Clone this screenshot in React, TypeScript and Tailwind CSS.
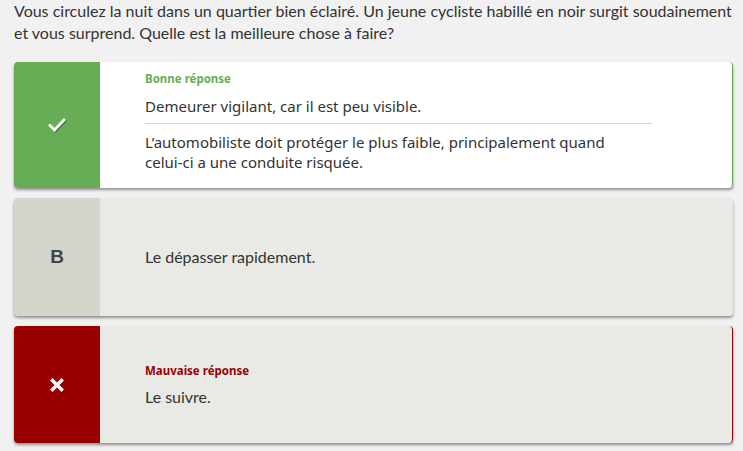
import React from "react";

const CheckIcon = () => (
  <svg width="18" height="16" viewBox="0 0 18 16" className="drop-shadow-[1px_1px_0_rgba(0,0,0,0.35)]">
    <path d="M2 8.5 L6.5 13 L16 3" fill="none" stroke="#ffffff" strokeWidth="2.8" strokeLinecap="square" />
  </svg>
);

const CrossIcon = () => (
  <svg width="14" height="14" viewBox="0 0 14 14">
    <path d="M2.5 2.5 L11.5 11.5 M11.5 2.5 L2.5 11.5" fill="none" stroke="#ffffff" strokeWidth="3.4" strokeLinecap="square" />
  </svg>
);

export default function App() {
  return (
    <div className="min-h-[451px] w-[743px] bg-[#f1f1f1] pl-[14px] pr-[10px] font-['Lato',sans-serif] text-[#333333]">
      <p className="text-[16px] leading-[22px]">
        Vous circulez la nuit dans un quartier bien éclairé. Un jeune cycliste habillé en noir surgit soudainement
        et vous surprend. Quelle est la meilleure chose à faire?
      </p>

      <div className="mt-[18px] flex flex-col gap-[10px]">
        {/* bonne réponse */}
        <div className="flex h-[126px] overflow-hidden rounded-[4px] border-r border-[#66ad55] bg-white shadow-[0_2px_3px_rgba(0,0,0,0.4)]">
          <div className="flex w-[86px] shrink-0 items-center justify-center bg-[#66ad55]">
            <CheckIcon />
          </div>
          <div className="flex flex-col pl-[45px] pt-[9px] font-['Noto_Sans',sans-serif]">
            <span className="text-[11.5px] font-bold leading-[16px] text-[#66ad55]">Bonne réponse</span>
            <span className="mt-[9px] text-[15px] leading-[20px] text-[#333333]">
              Demeurer vigilant, car il est peu visible.
            </span>
            <div className="mt-[7px] h-px w-[507px] bg-[#d6d6cc]" />
            <p className="mt-[8px] w-[490px] text-[15px] leading-[20px] text-[#333333]">
              L’automobiliste doit protéger le plus faible, principalement quand celui-ci a une conduite risquée.
            </p>
          </div>
        </div>

        {/* B */}
        <div className="flex h-[118px] overflow-hidden rounded-[4px] bg-[#e9eae5] shadow-[0_2px_3px_rgba(0,0,0,0.4)]">
          <div className="flex w-[86px] shrink-0 items-center justify-center bg-[#d4d6cc] font-['Liberation_Sans',sans-serif] text-[19px] font-bold text-[#444444]">
            B
          </div>
          <div className="flex items-center pl-[45px] text-[16px]">Le dépasser rapidement.</div>
        </div>

        {/* mauvaise réponse */}
        <div className="flex h-[117px] overflow-hidden rounded-[4px] border-r border-[#990000] bg-[#e9eae5] shadow-[0_2px_3px_rgba(0,0,0,0.4)]">
          <div className="flex w-[86px] shrink-0 items-center justify-center bg-[#990000]">
            <CrossIcon />
          </div>
          <div className="flex flex-col justify-center pl-[45px]">
            <span className="font-['Noto_Sans',sans-serif] text-[11.5px] font-bold leading-[16px] text-[#990000]">
              Mauvaise réponse
            </span>
            <span className="mt-[8px] text-[16px] leading-[20px]">Le suivre.</span>
          </div>
        </div>
      </div>
    </div>
  );
}
